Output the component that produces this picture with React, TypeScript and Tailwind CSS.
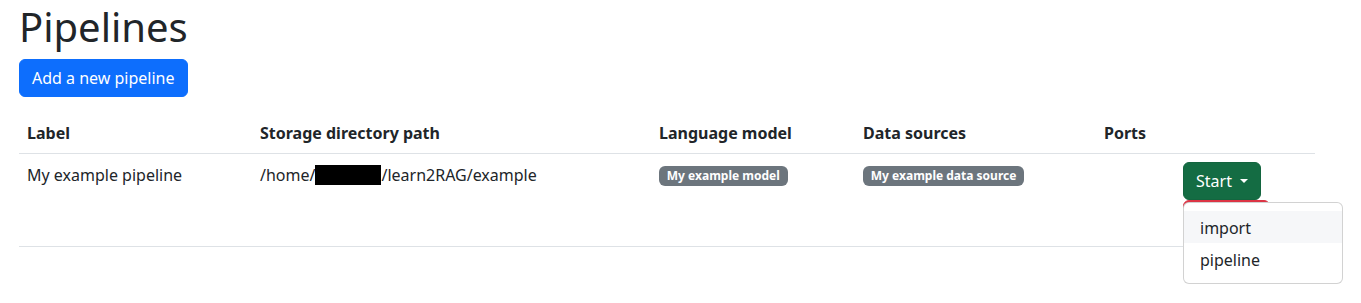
import React from "react";

const font = { fontFamily: '"Noto Sans", "Open Sans", sans-serif' };

export default function App() {
  return (
    <div className="min-h-[303px] bg-white px-[19px] pt-[3px] text-[16px] leading-[24px] text-[#212529] font-['Noto_Sans',sans-serif]" style={font}>
      <h1 className="mb-[8px] text-[40px] font-normal leading-[48px] text-[#212529]">Pipelines</h1>
      <button className="mb-[16px] rounded-[6px] border border-[#0d6efd] bg-[#0d6efd] px-[12px] py-[6px] text-[16px] leading-[24px] text-white">
        Add a new pipeline
      </button>
      <table className="w-[1296px] table-fixed border-collapse text-left">
        <colgroup>
          <col className="w-[233px]" />
          <col className="w-[399px]" />
          <col className="w-[204px]" />
          <col className="w-[241px]" />
          <col className="w-[79px]" />
          <col className="w-[140px]" />
        </colgroup>
        <thead>
          <tr className="border-b border-[#dee2e6]">
            <th className="p-[8px] font-bold">Label</th>
            <th className="p-[8px] font-bold">Storage directory path</th>
            <th className="p-[8px] font-bold">Language model</th>
            <th className="p-[8px] font-bold">Data sources</th>
            <th className="p-[8px] font-bold">Ports</th>
            <th className="p-[8px] font-bold"></th>
          </tr>
        </thead>
        <tbody>
          <tr className="border-b border-[#dee2e6] align-top">
            <td className="px-[8px] pt-[9px] pb-[7px]">My example pipeline</td>
            <td className="px-[8px] pt-[9px] pb-[7px]">
              /home/<span className="inline-block h-[20px] w-[66px] bg-black align-[-4px]"></span>/learn2RAG/example
            </td>
            <td className="p-[8px]">
              <span className="inline-block rounded-[6px] bg-[#6c757d] px-[7.8px] py-[4.2px] text-[12px] font-bold leading-[12px] text-white">
                My example model
              </span>
            </td>
            <td className="p-[8px]">
              <span className="inline-block rounded-[6px] bg-[#6c757d] px-[7.8px] py-[4.2px] text-[12px] font-bold leading-[12px] text-white">
                My example data source
              </span>
            </td>
            <td className="p-[8px]"></td>
            <td className="p-[8px]">
              <div className="relative flex flex-col items-start">
                <button className="flex items-center rounded-[6px] border border-[#13653f] bg-[#146c43] px-[12px] py-[6px] text-[16px] leading-[24px] text-white">
                  Start
                  <span className="ml-[8px] inline-block h-0 w-0 border-x-[4.8px] border-t-[4.8px] border-x-transparent border-t-white"></span>
                </button>
                <button className="h-[38px] w-[87px] rounded-[6px] border border-[#dc3545] bg-[#dc3545]" aria-label="Stop"></button>
                <div className="absolute left-0 top-[40px] z-10 w-[160px] rounded-[6px] border border-[rgba(0,0,0,0.175)] bg-white py-[8px]">
                  <div className="bg-[#f6f7f9] px-[16px] pt-[5px] pb-[3px] text-[16px] leading-[24px] text-[#212529]">import</div>
                  <div className="px-[16px] pt-[5px] pb-[3px] text-[16px] leading-[24px] text-[#212529]">pipeline</div>
                </div>
              </div>
            </td>
          </tr>
        </tbody>
      </table>
    </div>
  );
}
